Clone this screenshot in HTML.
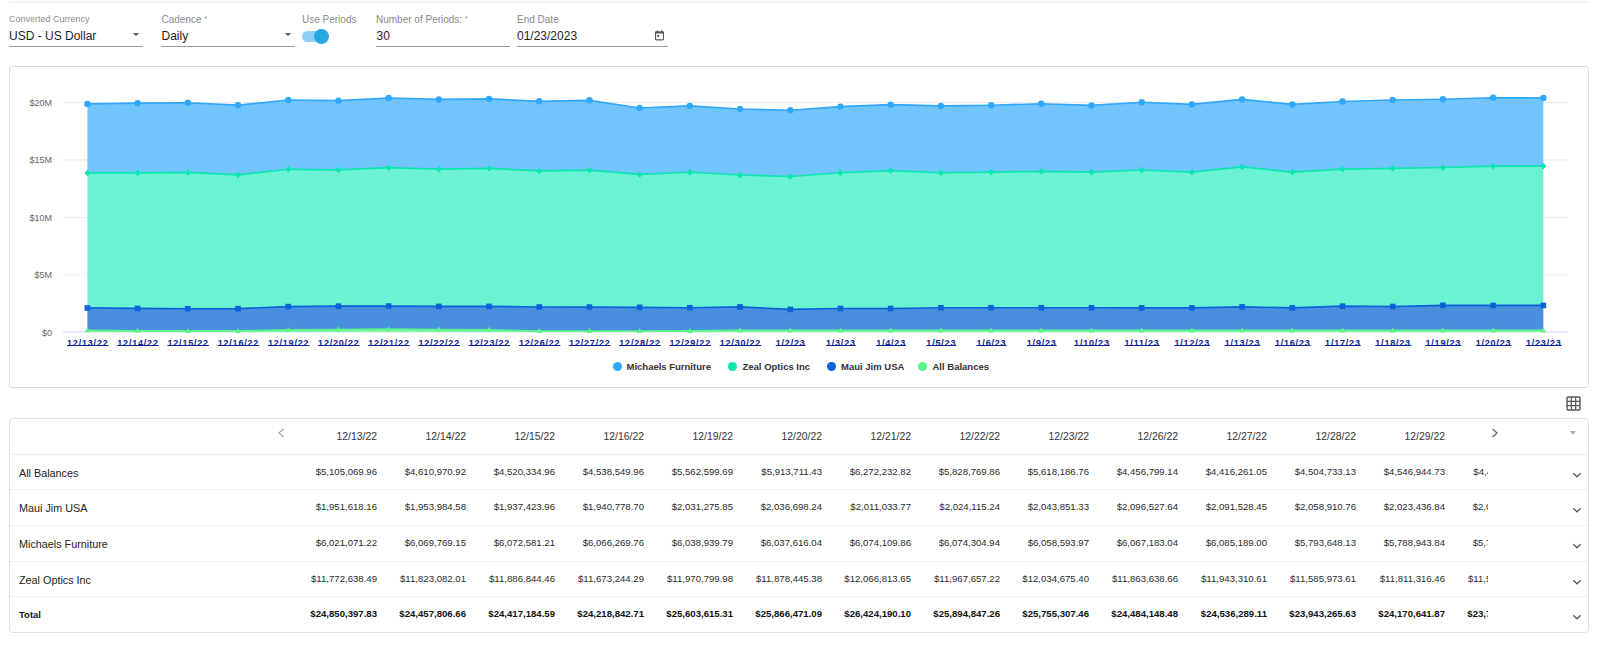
<!DOCTYPE html>
<html><head><meta charset="utf-8"><style>
html,body{margin:0;padding:0;background:#fff;}
body{width:1600px;height:658px;position:relative;overflow:hidden;font-family:"Liberation Sans",sans-serif;}
.a{position:absolute;white-space:nowrap;}
.topline{position:absolute;left:9px;top:1px;width:1580px;height:2px;background:#f3f3f3;}
.lbl{position:absolute;font-size:10px;color:#8a8a8a;line-height:12px;white-space:nowrap;}
.val{position:absolute;font-size:12px;color:#1e1e1e;line-height:14px;white-space:nowrap;}
.ul{position:absolute;height:1px;background:#9a9a9a;top:46px;}
.arr{position:absolute;width:0;height:0;border-left:3.4px solid transparent;border-right:3.4px solid transparent;border-top:3.7px solid #55585c;top:32.8px;}
.xl{position:absolute;top:338px;width:80px;text-align:center;font-size:9px;font-weight:bold;letter-spacing:0.8px;color:#0b2190;line-height:11px;text-decoration:underline;text-underline-offset:-0.5px;text-decoration-skip-ink:none;white-space:nowrap;text-indent:0.8px;}
.chart{position:absolute;left:9px;top:66px;width:1578px;height:320px;border:1px solid #dcdcdc;border-radius:3px;}
.leg{position:absolute;top:361px;font-size:9.5px;font-weight:bold;color:#333;line-height:12px;white-space:nowrap;}
.dot{position:absolute;width:9px;height:9px;border-radius:50%;top:361.5px;}
.tbl{position:absolute;left:9px;top:418px;width:1578px;height:213px;border:1px solid #e0e0e0;border-radius:4px;}
.thead{position:absolute;left:0;top:0;width:1578px;height:35px;border-bottom:1px solid #ebebeb;border-radius:0 0 4px 4px;}
.hd{position:absolute;top:12px;width:80px;text-align:right;font-size:10.4px;color:#333;line-height:12px;}
.rw{position:absolute;left:0;width:1578px;height:35.6px;}
.sep{position:absolute;left:0;width:1578px;height:1px;background:#f0f0f0;}
.lab{position:absolute;left:9px;top:12px;font-size:10.8px;color:#222;line-height:13px;white-space:nowrap;}
.clip{position:absolute;left:0;top:0;width:1478px;height:35px;overflow:hidden;}
.v{position:absolute;top:11px;width:100px;text-align:right;font-size:9.6px;color:#2a2a2a;line-height:12px;}
.b .lab,.b .v{font-weight:bold;color:#111;} .b .lab{font-size:9.5px;top:11px;}
.chev{position:absolute;left:1562px;top:17px;}
</style></head><body>
<div class="topline"></div>
<div class="lbl" style="left:9px;top:12.5px;font-size:9px;">Converted Currency</div>
<div class="val" style="left:9px;top:28.5px;">USD - US Dollar</div>
<div class="arr" style="left:132.8px;"></div>
<div class="ul" style="left:9px;width:134px;"></div>
<div class="lbl" style="left:161.5px;top:14px;">Cadence <span style="font-size:7px;position:relative;top:-2px">*</span></div>
<div class="val" style="left:161.5px;top:28.5px;">Daily</div>
<div class="arr" style="left:285px;"></div>
<div class="ul" style="left:161px;width:134px;"></div>
<div class="lbl" style="left:302px;top:14px;">Use Periods</div>
<div class="a" style="left:302px;top:31px;width:25px;height:10.5px;border-radius:5.25px;background:#8fd0f2;"></div>
<div class="a" style="left:314px;top:28.8px;width:15px;height:15px;border-radius:50%;background:#27a8e3;"></div>
<div class="lbl" style="left:376px;top:14px;">Number of Periods: <span style="font-size:7px;position:relative;top:-2px">*</span></div>
<div class="val" style="left:376.5px;top:28.5px;">30</div>
<div class="ul" style="left:376px;width:134px;"></div>
<div class="lbl" style="left:517px;top:14px;">End Date</div>
<div class="val" style="left:517px;top:28.5px;">01/23/2023</div>
<svg class="a" style="left:654px;top:30px" width="11" height="11" viewBox="0 0 11 11"><rect x="1.55" y="2.05" width="7.9" height="7.8" rx="0.9" fill="none" stroke="#575757" stroke-width="1.1"/><rect x="1" y="1.6" width="9" height="1.9" rx="0.6" fill="#575757"/><rect x="2.9" y="0.4" width="1.1" height="1.8" fill="#575757"/><rect x="7" y="0.4" width="1.1" height="1.8" fill="#575757"/><rect x="3.2" y="5" width="1.9" height="1.9" fill="#575757"/></svg>
<div class="ul" style="left:517px;width:151px;"></div>
<div class="chart"></div>
<svg width="1600" height="658" style="position:absolute;left:0;top:0">
<rect x="63" y="102.00" width="1505" height="1" fill="#ececec"/>
<rect x="63" y="159.45" width="1505" height="1" fill="#ececec"/>
<rect x="63" y="216.90" width="1505" height="1" fill="#ececec"/>
<rect x="63" y="274.35" width="1505" height="1" fill="#ececec"/>
<rect x="63" y="331.4" width="1505" height="1" fill="#ccd6eb"/>
<path d="M87.40 103.88 L137.61 103.22 L187.81 102.74 L238.02 105.21 L288.22 100.02 L338.42 100.66 L388.63 98.01 L438.84 99.45 L489.04 98.86 L539.25 101.31 L589.45 100.29 L639.65 108.02 L689.86 105.85 L740.06 109.00 L790.27 110.25 L840.47 106.60 L890.68 104.60 L940.88 105.90 L991.09 105.25 L1041.30 103.75 L1091.50 105.40 L1141.71 102.25 L1191.91 104.40 L1242.12 99.40 L1292.32 104.40 L1342.53 101.50 L1392.73 100.00 L1442.93 99.25 L1493.14 97.75 L1543.35 98.00 L1543.35 166.20 L1493.14 166.20 L1442.93 167.50 L1392.73 168.30 L1342.53 169.20 L1292.32 172.10 L1242.12 166.90 L1191.91 172.10 L1141.71 170.00 L1091.50 172.10 L1041.30 171.40 L991.09 172.10 L940.88 172.75 L890.68 170.60 L840.47 172.75 L790.27 176.50 L740.06 175.00 L689.86 172.25 L639.65 174.47 L589.45 170.09 L539.25 170.90 L489.04 168.35 L438.84 169.13 L388.63 167.68 L338.42 169.92 L288.22 169.28 L238.02 174.79 L187.81 172.40 L137.61 172.84 L87.40 172.94 Z" fill="#72c4fc"/>
<path d="M87.40 172.94 L137.61 172.84 L187.81 172.40 L238.02 174.79 L288.22 169.28 L338.42 169.92 L388.63 167.68 L438.84 169.13 L489.04 168.35 L539.25 170.90 L589.45 170.09 L639.65 174.47 L689.86 172.25 L740.06 175.00 L790.27 176.50 L840.47 172.75 L890.68 170.60 L940.88 172.75 L991.09 172.10 L1041.30 171.40 L1091.50 172.10 L1141.71 170.00 L1191.91 172.10 L1242.12 166.90 L1292.32 172.10 L1342.53 169.20 L1392.73 168.30 L1442.93 167.50 L1493.14 166.20 L1543.35 166.20 L1543.35 305.45 L1493.14 305.45 L1442.93 305.30 L1392.73 306.50 L1342.53 306.20 L1292.32 307.90 L1242.12 306.90 L1191.91 307.90 L1141.71 307.90 L1091.50 307.75 L1041.30 307.75 L991.09 307.75 L940.88 307.75 L890.68 308.50 L840.47 308.50 L790.27 309.40 L740.06 306.90 L689.86 307.73 L639.65 307.36 L589.45 307.08 L539.25 306.98 L489.04 306.39 L438.84 306.39 L388.63 306.09 L338.42 306.16 L288.22 306.59 L238.02 308.68 L187.81 308.74 L137.61 308.46 L87.40 307.97 Z" fill="#6af2d2"/>
<path d="M87.40 307.97 L137.61 308.46 L187.81 308.74 L238.02 308.68 L288.22 306.59 L338.42 306.16 L388.63 306.09 L438.84 306.39 L489.04 306.39 L539.25 306.98 L589.45 307.08 L639.65 307.36 L689.86 307.73 L740.06 306.90 L790.27 309.40 L840.47 308.50 L890.68 308.50 L940.88 307.75 L991.09 307.75 L1041.30 307.75 L1091.50 307.75 L1141.71 307.90 L1191.91 307.90 L1242.12 306.90 L1292.32 307.90 L1342.53 306.20 L1392.73 306.50 L1442.93 305.30 L1493.14 305.45 L1543.35 305.45 L1543.35 330.41 L1493.14 330.41 L1442.93 330.41 L1392.73 330.41 L1342.53 330.41 L1292.32 330.41 L1242.12 330.41 L1191.91 330.41 L1141.71 330.41 L1091.50 330.41 L1041.30 330.41 L991.09 330.41 L940.88 330.41 L890.68 330.41 L840.47 330.41 L790.27 330.41 L740.06 330.41 L689.86 330.93 L639.65 330.98 L589.45 331.07 L539.25 331.03 L489.04 329.83 L438.84 329.61 L388.63 329.15 L338.42 329.52 L288.22 329.89 L238.02 330.94 L187.81 330.96 L137.61 330.87 L87.40 330.36 Z" fill="#4a8fde"/>
<path d="M87.40 330.36 L137.61 330.87 L187.81 330.96 L238.02 330.94 L288.22 329.89 L338.42 329.52 L388.63 329.15 L438.84 329.61 L489.04 329.83 L539.25 331.03 L589.45 331.07 L639.65 330.98 L689.86 330.93 L740.06 330.41 L790.27 330.41 L840.47 330.41 L890.68 330.41 L940.88 330.41 L991.09 330.41 L1041.30 330.41 L1091.50 330.41 L1141.71 330.41 L1191.91 330.41 L1242.12 330.41 L1292.32 330.41 L1342.53 330.41 L1392.73 330.41 L1442.93 330.41 L1493.14 330.41 L1543.35 330.41 L1543.35 331.90 L1493.14 331.90 L1442.93 331.90 L1392.73 331.90 L1342.53 331.90 L1292.32 331.90 L1242.12 331.90 L1191.91 331.90 L1141.71 331.90 L1091.50 331.90 L1041.30 331.90 L991.09 331.90 L940.88 331.90 L890.68 331.90 L840.47 331.90 L790.27 331.90 L740.06 331.90 L689.86 331.90 L639.65 331.90 L589.45 331.90 L539.25 331.90 L489.04 331.90 L438.84 331.90 L388.63 331.90 L338.42 331.90 L288.22 331.90 L238.02 331.90 L187.81 331.90 L137.61 331.90 L87.40 331.90 Z" fill="#84f7a6"/>
<path d="M87.40 330.36 L137.61 330.87 L187.81 330.96 L238.02 330.94 L288.22 329.89 L338.42 329.52 L388.63 329.15 L438.84 329.61 L489.04 329.83 L539.25 331.03 L589.45 331.07 L639.65 330.98 L689.86 330.93 L740.06 330.41 L790.27 330.41 L840.47 330.41 L890.68 330.41 L940.88 330.41 L991.09 330.41 L1041.30 330.41 L1091.50 330.41 L1141.71 330.41 L1191.91 330.41 L1242.12 330.41 L1292.32 330.41 L1342.53 330.41 L1392.73 330.41 L1442.93 330.41 L1493.14 330.41 L1543.35 330.41" fill="none" stroke="#5cf58a" stroke-width="1.7" stroke-linejoin="round"/>
<path d="M87.40 307.97 L137.61 308.46 L187.81 308.74 L238.02 308.68 L288.22 306.59 L338.42 306.16 L388.63 306.09 L438.84 306.39 L489.04 306.39 L539.25 306.98 L589.45 307.08 L639.65 307.36 L689.86 307.73 L740.06 306.90 L790.27 309.40 L840.47 308.50 L890.68 308.50 L940.88 307.75 L991.09 307.75 L1041.30 307.75 L1091.50 307.75 L1141.71 307.90 L1191.91 307.90 L1242.12 306.90 L1292.32 307.90 L1342.53 306.20 L1392.73 306.50 L1442.93 305.30 L1493.14 305.45 L1543.35 305.45" fill="none" stroke="#0a62d6" stroke-width="1.7" stroke-linejoin="round"/>
<path d="M87.40 172.94 L137.61 172.84 L187.81 172.40 L238.02 174.79 L288.22 169.28 L338.42 169.92 L388.63 167.68 L438.84 169.13 L489.04 168.35 L539.25 170.90 L589.45 170.09 L639.65 174.47 L689.86 172.25 L740.06 175.00 L790.27 176.50 L840.47 172.75 L890.68 170.60 L940.88 172.75 L991.09 172.10 L1041.30 171.40 L1091.50 172.10 L1141.71 170.00 L1191.91 172.10 L1242.12 166.90 L1292.32 172.10 L1342.53 169.20 L1392.73 168.30 L1442.93 167.50 L1493.14 166.20 L1543.35 166.20" fill="none" stroke="#0ae6b0" stroke-width="1.7" stroke-linejoin="round"/>
<path d="M87.40 103.88 L137.61 103.22 L187.81 102.74 L238.02 105.21 L288.22 100.02 L338.42 100.66 L388.63 98.01 L438.84 99.45 L489.04 98.86 L539.25 101.31 L589.45 100.29 L639.65 108.02 L689.86 105.85 L740.06 109.00 L790.27 110.25 L840.47 106.60 L890.68 104.60 L940.88 105.90 L991.09 105.25 L1041.30 103.75 L1091.50 105.40 L1141.71 102.25 L1191.91 104.40 L1242.12 99.40 L1292.32 104.40 L1342.53 101.50 L1392.73 100.00 L1442.93 99.25 L1493.14 97.75 L1543.35 98.00" fill="none" stroke="#2fa8fb" stroke-width="1.7" stroke-linejoin="round"/>
<circle cx="87.40" cy="103.88" r="3.2" fill="#2fa8fb"/>
<path d="M87.40 169.54 L90.40 172.94 L87.40 176.34 L84.40 172.94 Z" fill="#0ae6b0"/>
<rect x="84.60" y="305.17" width="5.6" height="5.6" fill="#0a62d6"/>
<path d="M87.40 327.36 L90.20 332.36 L84.60 332.36 Z" fill="#5cf58a"/>
<circle cx="137.61" cy="103.22" r="3.2" fill="#2fa8fb"/>
<path d="M137.61 169.44 L140.61 172.84 L137.61 176.24 L134.61 172.84 Z" fill="#0ae6b0"/>
<rect x="134.81" y="305.66" width="5.6" height="5.6" fill="#0a62d6"/>
<path d="M137.61 327.87 L140.41 332.87 L134.81 332.87 Z" fill="#5cf58a"/>
<circle cx="187.81" cy="102.74" r="3.2" fill="#2fa8fb"/>
<path d="M187.81 169.00 L190.81 172.40 L187.81 175.80 L184.81 172.40 Z" fill="#0ae6b0"/>
<rect x="185.01" y="305.94" width="5.6" height="5.6" fill="#0a62d6"/>
<path d="M187.81 327.96 L190.61 332.96 L185.01 332.96 Z" fill="#5cf58a"/>
<circle cx="238.02" cy="105.21" r="3.2" fill="#2fa8fb"/>
<path d="M238.02 171.39 L241.02 174.79 L238.02 178.19 L235.02 174.79 Z" fill="#0ae6b0"/>
<rect x="235.22" y="305.88" width="5.6" height="5.6" fill="#0a62d6"/>
<path d="M238.02 327.94 L240.82 332.94 L235.22 332.94 Z" fill="#5cf58a"/>
<circle cx="288.22" cy="100.02" r="3.2" fill="#2fa8fb"/>
<path d="M288.22 165.88 L291.22 169.28 L288.22 172.68 L285.22 169.28 Z" fill="#0ae6b0"/>
<rect x="285.42" y="303.79" width="5.6" height="5.6" fill="#0a62d6"/>
<path d="M288.22 326.89 L291.02 331.89 L285.42 331.89 Z" fill="#5cf58a"/>
<circle cx="338.42" cy="100.66" r="3.2" fill="#2fa8fb"/>
<path d="M338.42 166.52 L341.42 169.92 L338.42 173.32 L335.42 169.92 Z" fill="#0ae6b0"/>
<rect x="335.62" y="303.36" width="5.6" height="5.6" fill="#0a62d6"/>
<path d="M338.42 326.52 L341.22 331.52 L335.62 331.52 Z" fill="#5cf58a"/>
<circle cx="388.63" cy="98.01" r="3.2" fill="#2fa8fb"/>
<path d="M388.63 164.28 L391.63 167.68 L388.63 171.08 L385.63 167.68 Z" fill="#0ae6b0"/>
<rect x="385.83" y="303.29" width="5.6" height="5.6" fill="#0a62d6"/>
<path d="M388.63 326.15 L391.43 331.15 L385.83 331.15 Z" fill="#5cf58a"/>
<circle cx="438.84" cy="99.45" r="3.2" fill="#2fa8fb"/>
<path d="M438.84 165.73 L441.84 169.13 L438.84 172.53 L435.84 169.13 Z" fill="#0ae6b0"/>
<rect x="436.04" y="303.59" width="5.6" height="5.6" fill="#0a62d6"/>
<path d="M438.84 326.61 L441.64 331.61 L436.04 331.61 Z" fill="#5cf58a"/>
<circle cx="489.04" cy="98.86" r="3.2" fill="#2fa8fb"/>
<path d="M489.04 164.95 L492.04 168.35 L489.04 171.75 L486.04 168.35 Z" fill="#0ae6b0"/>
<rect x="486.24" y="303.59" width="5.6" height="5.6" fill="#0a62d6"/>
<path d="M489.04 326.83 L491.84 331.83 L486.24 331.83 Z" fill="#5cf58a"/>
<circle cx="539.25" cy="101.31" r="3.2" fill="#2fa8fb"/>
<path d="M539.25 167.50 L542.25 170.90 L539.25 174.30 L536.25 170.90 Z" fill="#0ae6b0"/>
<rect x="536.45" y="304.18" width="5.6" height="5.6" fill="#0a62d6"/>
<path d="M539.25 328.03 L542.04 333.03 L536.45 333.03 Z" fill="#5cf58a"/>
<circle cx="589.45" cy="100.29" r="3.2" fill="#2fa8fb"/>
<path d="M589.45 166.69 L592.45 170.09 L589.45 173.49 L586.45 170.09 Z" fill="#0ae6b0"/>
<rect x="586.65" y="304.28" width="5.6" height="5.6" fill="#0a62d6"/>
<path d="M589.45 328.07 L592.25 333.07 L586.65 333.07 Z" fill="#5cf58a"/>
<circle cx="639.65" cy="108.02" r="3.2" fill="#2fa8fb"/>
<path d="M639.65 171.07 L642.65 174.47 L639.65 177.87 L636.65 174.47 Z" fill="#0ae6b0"/>
<rect x="636.86" y="304.56" width="5.6" height="5.6" fill="#0a62d6"/>
<path d="M639.65 327.98 L642.45 332.98 L636.86 332.98 Z" fill="#5cf58a"/>
<circle cx="689.86" cy="105.85" r="3.2" fill="#2fa8fb"/>
<path d="M689.86 168.85 L692.86 172.25 L689.86 175.65 L686.86 172.25 Z" fill="#0ae6b0"/>
<rect x="687.06" y="304.93" width="5.6" height="5.6" fill="#0a62d6"/>
<path d="M689.86 327.93 L692.66 332.93 L687.06 332.93 Z" fill="#5cf58a"/>
<circle cx="740.06" cy="109.00" r="3.2" fill="#2fa8fb"/>
<path d="M740.06 171.60 L743.06 175.00 L740.06 178.40 L737.06 175.00 Z" fill="#0ae6b0"/>
<rect x="737.26" y="304.10" width="5.6" height="5.6" fill="#0a62d6"/>
<path d="M740.06 327.41 L742.86 332.41 L737.26 332.41 Z" fill="#5cf58a"/>
<circle cx="790.27" cy="110.25" r="3.2" fill="#2fa8fb"/>
<path d="M790.27 173.10 L793.27 176.50 L790.27 179.90 L787.27 176.50 Z" fill="#0ae6b0"/>
<rect x="787.47" y="306.60" width="5.6" height="5.6" fill="#0a62d6"/>
<path d="M790.27 327.41 L793.07 332.41 L787.47 332.41 Z" fill="#5cf58a"/>
<circle cx="840.47" cy="106.60" r="3.2" fill="#2fa8fb"/>
<path d="M840.47 169.35 L843.47 172.75 L840.47 176.15 L837.47 172.75 Z" fill="#0ae6b0"/>
<rect x="837.67" y="305.70" width="5.6" height="5.6" fill="#0a62d6"/>
<path d="M840.47 327.41 L843.27 332.41 L837.67 332.41 Z" fill="#5cf58a"/>
<circle cx="890.68" cy="104.60" r="3.2" fill="#2fa8fb"/>
<path d="M890.68 167.20 L893.68 170.60 L890.68 174.00 L887.68 170.60 Z" fill="#0ae6b0"/>
<rect x="887.88" y="305.70" width="5.6" height="5.6" fill="#0a62d6"/>
<path d="M890.68 327.41 L893.48 332.41 L887.88 332.41 Z" fill="#5cf58a"/>
<circle cx="940.88" cy="105.90" r="3.2" fill="#2fa8fb"/>
<path d="M940.88 169.35 L943.88 172.75 L940.88 176.15 L937.88 172.75 Z" fill="#0ae6b0"/>
<rect x="938.09" y="304.95" width="5.6" height="5.6" fill="#0a62d6"/>
<path d="M940.88 327.41 L943.68 332.41 L938.09 332.41 Z" fill="#5cf58a"/>
<circle cx="991.09" cy="105.25" r="3.2" fill="#2fa8fb"/>
<path d="M991.09 168.70 L994.09 172.10 L991.09 175.50 L988.09 172.10 Z" fill="#0ae6b0"/>
<rect x="988.29" y="304.95" width="5.6" height="5.6" fill="#0a62d6"/>
<path d="M991.09 327.41 L993.89 332.41 L988.29 332.41 Z" fill="#5cf58a"/>
<circle cx="1041.30" cy="103.75" r="3.2" fill="#2fa8fb"/>
<path d="M1041.30 168.00 L1044.30 171.40 L1041.30 174.80 L1038.30 171.40 Z" fill="#0ae6b0"/>
<rect x="1038.50" y="304.95" width="5.6" height="5.6" fill="#0a62d6"/>
<path d="M1041.30 327.41 L1044.10 332.41 L1038.50 332.41 Z" fill="#5cf58a"/>
<circle cx="1091.50" cy="105.40" r="3.2" fill="#2fa8fb"/>
<path d="M1091.50 168.70 L1094.50 172.10 L1091.50 175.50 L1088.50 172.10 Z" fill="#0ae6b0"/>
<rect x="1088.70" y="304.95" width="5.6" height="5.6" fill="#0a62d6"/>
<path d="M1091.50 327.41 L1094.30 332.41 L1088.70 332.41 Z" fill="#5cf58a"/>
<circle cx="1141.71" cy="102.25" r="3.2" fill="#2fa8fb"/>
<path d="M1141.71 166.60 L1144.71 170.00 L1141.71 173.40 L1138.71 170.00 Z" fill="#0ae6b0"/>
<rect x="1138.91" y="305.10" width="5.6" height="5.6" fill="#0a62d6"/>
<path d="M1141.71 327.41 L1144.51 332.41 L1138.91 332.41 Z" fill="#5cf58a"/>
<circle cx="1191.91" cy="104.40" r="3.2" fill="#2fa8fb"/>
<path d="M1191.91 168.70 L1194.91 172.10 L1191.91 175.50 L1188.91 172.10 Z" fill="#0ae6b0"/>
<rect x="1189.11" y="305.10" width="5.6" height="5.6" fill="#0a62d6"/>
<path d="M1191.91 327.41 L1194.71 332.41 L1189.11 332.41 Z" fill="#5cf58a"/>
<circle cx="1242.12" cy="99.40" r="3.2" fill="#2fa8fb"/>
<path d="M1242.12 163.50 L1245.12 166.90 L1242.12 170.30 L1239.12 166.90 Z" fill="#0ae6b0"/>
<rect x="1239.32" y="304.10" width="5.6" height="5.6" fill="#0a62d6"/>
<path d="M1242.12 327.41 L1244.91 332.41 L1239.32 332.41 Z" fill="#5cf58a"/>
<circle cx="1292.32" cy="104.40" r="3.2" fill="#2fa8fb"/>
<path d="M1292.32 168.70 L1295.32 172.10 L1292.32 175.50 L1289.32 172.10 Z" fill="#0ae6b0"/>
<rect x="1289.52" y="305.10" width="5.6" height="5.6" fill="#0a62d6"/>
<path d="M1292.32 327.41 L1295.12 332.41 L1289.52 332.41 Z" fill="#5cf58a"/>
<circle cx="1342.53" cy="101.50" r="3.2" fill="#2fa8fb"/>
<path d="M1342.53 165.80 L1345.53 169.20 L1342.53 172.60 L1339.53 169.20 Z" fill="#0ae6b0"/>
<rect x="1339.73" y="303.40" width="5.6" height="5.6" fill="#0a62d6"/>
<path d="M1342.53 327.41 L1345.33 332.41 L1339.73 332.41 Z" fill="#5cf58a"/>
<circle cx="1392.73" cy="100.00" r="3.2" fill="#2fa8fb"/>
<path d="M1392.73 164.90 L1395.73 168.30 L1392.73 171.70 L1389.73 168.30 Z" fill="#0ae6b0"/>
<rect x="1389.93" y="303.70" width="5.6" height="5.6" fill="#0a62d6"/>
<path d="M1392.73 327.41 L1395.53 332.41 L1389.93 332.41 Z" fill="#5cf58a"/>
<circle cx="1442.93" cy="99.25" r="3.2" fill="#2fa8fb"/>
<path d="M1442.93 164.10 L1445.93 167.50 L1442.93 170.90 L1439.93 167.50 Z" fill="#0ae6b0"/>
<rect x="1440.13" y="302.50" width="5.6" height="5.6" fill="#0a62d6"/>
<path d="M1442.93 327.41 L1445.73 332.41 L1440.13 332.41 Z" fill="#5cf58a"/>
<circle cx="1493.14" cy="97.75" r="3.2" fill="#2fa8fb"/>
<path d="M1493.14 162.80 L1496.14 166.20 L1493.14 169.60 L1490.14 166.20 Z" fill="#0ae6b0"/>
<rect x="1490.34" y="302.65" width="5.6" height="5.6" fill="#0a62d6"/>
<path d="M1493.14 327.41 L1495.94 332.41 L1490.34 332.41 Z" fill="#5cf58a"/>
<circle cx="1543.35" cy="98.00" r="3.2" fill="#2fa8fb"/>
<path d="M1543.35 162.80 L1546.35 166.20 L1543.35 169.60 L1540.35 166.20 Z" fill="#0ae6b0"/>
<rect x="1540.55" y="302.65" width="5.6" height="5.6" fill="#0a62d6"/>
<path d="M1543.35 327.41 L1546.14 332.41 L1540.55 332.41 Z" fill="#5cf58a"/>
<text x="52" y="106.00" text-anchor="end" font-family="Liberation Sans" font-size="9" fill="#666">$20M</text>
<text x="52" y="163.45" text-anchor="end" font-family="Liberation Sans" font-size="9" fill="#666">$15M</text>
<text x="52" y="220.90" text-anchor="end" font-family="Liberation Sans" font-size="9" fill="#666">$10M</text>
<text x="52" y="278.35" text-anchor="end" font-family="Liberation Sans" font-size="9" fill="#666">$5M</text>
<text x="52" y="335.80" text-anchor="end" font-family="Liberation Sans" font-size="9" fill="#666">$0</text>
</svg>
<div class="xl" style="left:47.40px">12/13/22</div>
<div class="xl" style="left:97.61px">12/14/22</div>
<div class="xl" style="left:147.81px">12/15/22</div>
<div class="xl" style="left:198.02px">12/16/22</div>
<div class="xl" style="left:248.22px">12/19/22</div>
<div class="xl" style="left:298.42px">12/20/22</div>
<div class="xl" style="left:348.63px">12/21/22</div>
<div class="xl" style="left:398.84px">12/22/22</div>
<div class="xl" style="left:449.04px">12/23/22</div>
<div class="xl" style="left:499.25px">12/26/22</div>
<div class="xl" style="left:549.45px">12/27/22</div>
<div class="xl" style="left:599.65px">12/28/22</div>
<div class="xl" style="left:649.86px">12/29/22</div>
<div class="xl" style="left:700.06px">12/30/22</div>
<div class="xl" style="left:750.27px">1/2/23</div>
<div class="xl" style="left:800.47px">1/3/23</div>
<div class="xl" style="left:850.68px">1/4/23</div>
<div class="xl" style="left:900.88px">1/5/23</div>
<div class="xl" style="left:951.09px">1/6/23</div>
<div class="xl" style="left:1001.30px">1/9/23</div>
<div class="xl" style="left:1051.50px">1/10/23</div>
<div class="xl" style="left:1101.71px">1/11/23</div>
<div class="xl" style="left:1151.91px">1/12/23</div>
<div class="xl" style="left:1202.12px">1/13/23</div>
<div class="xl" style="left:1252.32px">1/16/23</div>
<div class="xl" style="left:1302.53px">1/17/23</div>
<div class="xl" style="left:1352.73px">1/18/23</div>
<div class="xl" style="left:1402.93px">1/19/23</div>
<div class="xl" style="left:1453.14px">1/20/23</div>
<div class="xl" style="left:1503.35px">1/23/23</div>
<div class="dot" style="left:612.5px;background:#2fa8fb;"></div>
<div class="leg" style="left:626.5px;">Michaels Furniture</div>
<div class="dot" style="left:728px;background:#0ae6b0;"></div>
<div class="leg" style="left:742.5px;">Zeal Optics Inc</div>
<div class="dot" style="left:826.5px;background:#0a62d6;"></div>
<div class="leg" style="left:841px;">Maui Jim USA</div>
<div class="dot" style="left:918px;background:#5cf58a;"></div>
<div class="leg" style="left:932.5px;">All Balances</div>
<svg class="a" style="left:1566px;top:395.5px" width="15" height="15" viewBox="0 0 15 15"><rect x="1" y="1" width="13" height="13" rx="1" fill="none" stroke="#555" stroke-width="1.4"/><path d="M5.33 1 V14 M9.67 1 V14 M1 5.33 H14 M1 9.67 H14" stroke="#555" stroke-width="1.2"/></svg>
<div class="tbl">
<div class="thead">
<svg class="a" style="left:267px;top:9px" width="8" height="10" viewBox="0 0 8 10"><path d="M6.5 1 L1.8 5 L6.5 9" fill="none" stroke="#aaa" stroke-width="1.2"/></svg>
<div class="hd" style="left:287px">12/13/22</div><div class="hd" style="left:376px">12/14/22</div><div class="hd" style="left:465px">12/15/22</div><div class="hd" style="left:554px">12/16/22</div><div class="hd" style="left:643px">12/19/22</div><div class="hd" style="left:732px">12/20/22</div><div class="hd" style="left:821px">12/21/22</div><div class="hd" style="left:910px">12/22/22</div><div class="hd" style="left:999px">12/23/22</div><div class="hd" style="left:1088px">12/26/22</div><div class="hd" style="left:1177px">12/27/22</div><div class="hd" style="left:1266px">12/28/22</div><div class="hd" style="left:1355px">12/29/22</div>
<svg class="a" style="left:1481px;top:9px" width="8" height="10" viewBox="0 0 8 10"><path d="M1.5 1 L6 5 L1.5 9" fill="none" stroke="#666" stroke-width="1.3"/></svg>
<div class="a" style="left:1560px;top:12.3px;width:0;height:0;border-left:3.7px solid transparent;border-right:3.7px solid transparent;border-top:4px solid #b0b0b0;"></div>
</div>
<div class="rw" style="top:36.0px"><div class="lab">All Balances</div><div class="clip"><div class="v" style="left:267px">$5,105,069.96</div><div class="v" style="left:356px">$4,610,970.92</div><div class="v" style="left:445px">$4,520,334.96</div><div class="v" style="left:534px">$4,538,549.96</div><div class="v" style="left:623px">$5,562,599.69</div><div class="v" style="left:712px">$5,913,711.43</div><div class="v" style="left:801px">$6,272,232.82</div><div class="v" style="left:890px">$5,828,769.86</div><div class="v" style="left:979px">$5,618,186.76</div><div class="v" style="left:1068px">$4,456,799.14</div><div class="v" style="left:1157px">$4,416,261.05</div><div class="v" style="left:1246px">$4,504,733.13</div><div class="v" style="left:1335px">$4,546,944.73</div><div class="v" style="left:1424px">$4,496,112.35</div></div><svg class="chev" width="10" height="6" viewBox="0 0 10 6"><path d="M1.3 1.2 L5 4.8 L8.7 1.2" fill="none" stroke="#555" stroke-width="1.2"/></svg></div><div class="sep" style="top:70.4px"></div><div class="rw" style="top:71.4px"><div class="lab">Maui Jim USA</div><div class="clip"><div class="v" style="left:267px">$1,951,618.16</div><div class="v" style="left:356px">$1,953,984.58</div><div class="v" style="left:445px">$1,937,423.96</div><div class="v" style="left:534px">$1,940,778.70</div><div class="v" style="left:623px">$2,031,275.85</div><div class="v" style="left:712px">$2,036,698.24</div><div class="v" style="left:801px">$2,011,033.77</div><div class="v" style="left:890px">$2,024,115.24</div><div class="v" style="left:979px">$2,043,851.33</div><div class="v" style="left:1068px">$2,096,527.64</div><div class="v" style="left:1157px">$2,091,528.45</div><div class="v" style="left:1246px">$2,058,910.76</div><div class="v" style="left:1335px">$2,023,436.84</div><div class="v" style="left:1424px">$2,012,345.67</div></div><svg class="chev" width="10" height="6" viewBox="0 0 10 6"><path d="M1.3 1.2 L5 4.8 L8.7 1.2" fill="none" stroke="#555" stroke-width="1.2"/></svg></div><div class="sep" style="top:106.0px"></div><div class="rw" style="top:107.0px"><div class="lab">Michaels Furniture</div><div class="clip"><div class="v" style="left:267px">$6,021,071.22</div><div class="v" style="left:356px">$6,069,769.15</div><div class="v" style="left:445px">$6,072,581.21</div><div class="v" style="left:534px">$6,066,269.76</div><div class="v" style="left:623px">$6,038,939.79</div><div class="v" style="left:712px">$6,037,616.04</div><div class="v" style="left:801px">$6,074,109.86</div><div class="v" style="left:890px">$6,074,304.94</div><div class="v" style="left:979px">$6,058,593.97</div><div class="v" style="left:1068px">$6,067,183.04</div><div class="v" style="left:1157px">$6,085,189.00</div><div class="v" style="left:1246px">$5,793,648.13</div><div class="v" style="left:1335px">$5,788,943.84</div><div class="v" style="left:1424px">$5,712,345.67</div></div><svg class="chev" width="10" height="6" viewBox="0 0 10 6"><path d="M1.3 1.2 L5 4.8 L8.7 1.2" fill="none" stroke="#555" stroke-width="1.2"/></svg></div><div class="sep" style="top:141.6px"></div><div class="rw" style="top:142.6px"><div class="lab">Zeal Optics Inc</div><div class="clip"><div class="v" style="left:267px">$11,772,638.49</div><div class="v" style="left:356px">$11,823,082.01</div><div class="v" style="left:445px">$11,886,844.46</div><div class="v" style="left:534px">$11,673,244.29</div><div class="v" style="left:623px">$11,970,799.98</div><div class="v" style="left:712px">$11,878,445.38</div><div class="v" style="left:801px">$12,066,813.65</div><div class="v" style="left:890px">$11,967,657.22</div><div class="v" style="left:979px">$12,034,675.40</div><div class="v" style="left:1068px">$11,863,638.66</div><div class="v" style="left:1157px">$11,943,310.61</div><div class="v" style="left:1246px">$11,585,973.61</div><div class="v" style="left:1335px">$11,811,316.46</div><div class="v" style="left:1424px">$11,512,345.67</div></div><svg class="chev" width="10" height="6" viewBox="0 0 10 6"><path d="M1.3 1.2 L5 4.8 L8.7 1.2" fill="none" stroke="#555" stroke-width="1.2"/></svg></div><div class="sep" style="top:177.4px"></div><div class="rw b" style="top:178.4px"><div class="lab">Total</div><div class="clip"><div class="v" style="left:267px">$24,850,397.83</div><div class="v" style="left:356px">$24,457,806.66</div><div class="v" style="left:445px">$24,417,184.59</div><div class="v" style="left:534px">$24,218,842.71</div><div class="v" style="left:623px">$25,603,615.31</div><div class="v" style="left:712px">$25,866,471.09</div><div class="v" style="left:801px">$26,424,190.10</div><div class="v" style="left:890px">$25,894,847.26</div><div class="v" style="left:979px">$25,755,307.46</div><div class="v" style="left:1068px">$24,484,148.48</div><div class="v" style="left:1157px">$24,536,289.11</div><div class="v" style="left:1246px">$23,943,265.63</div><div class="v" style="left:1335px">$24,170,641.87</div><div class="v" style="left:1424px">$23,712,345.67</div></div><svg class="chev" width="10" height="6" viewBox="0 0 10 6"><path d="M1.3 1.2 L5 4.8 L8.7 1.2" fill="none" stroke="#555" stroke-width="1.2"/></svg></div>
</div>
</body></html>
